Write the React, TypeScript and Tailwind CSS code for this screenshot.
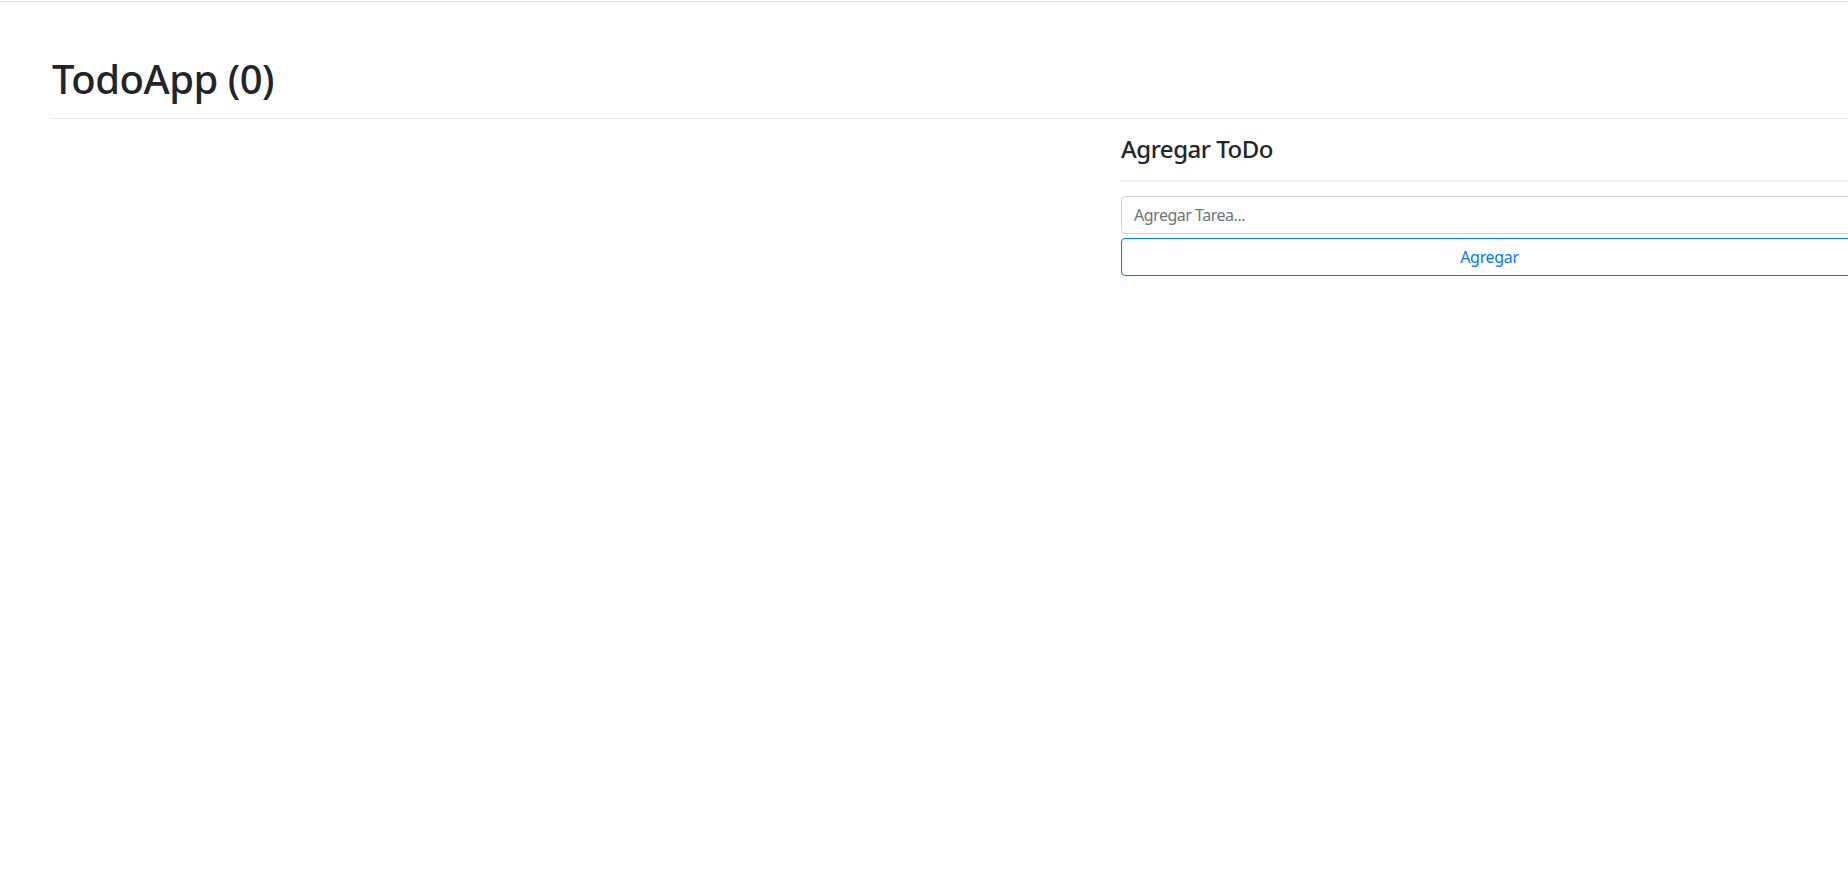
export default function App() {
  return (
    <div
      className="h-screen w-full overflow-hidden bg-white text-[#212529]"
      style={{ fontFamily: '"Noto Sans", "Open Sans", sans-serif' }}
    >
      <div className="h-px bg-white" />
      <div className="h-px bg-[#dcdcdc]" />
      <div className="ml-[52px] w-[1804px] pt-[53px]">
        <h1 className="text-[40px] leading-[48px] font-medium tracking-[-0.012em]">TodoApp (0)</h1>
        <hr className="mt-[15px] mb-4 border-0 border-t border-[#e6e6e6]" />
        <div className="flex gap-[29px]">
          <div className="w-[1040px] shrink-0" />
          <div className="w-[737px] shrink-0">
            <h4 className="text-2xl leading-[28.8px] font-medium tracking-[-0.02em] mb-2">Agregar ToDo</h4>
            <hr className="mt-4 mb-[15px] border-0 border-t border-[#e6e6e6]" />
            <input
              type="text"
              placeholder="Agregar Tarea..."
              className="block w-full h-[38px] px-3 py-1.5 text-base leading-6 tracking-[-0.03em] text-[#495057] bg-white border border-[#ced4da] rounded placeholder:text-[#6c757d] outline-none"
            />
            <button className="mt-1 block w-full h-[38px] px-3 py-1.5 text-base leading-6 tracking-[-0.02em] text-[#007bff] bg-white border border-[#007bff] rounded">
              Agregar
            </button>
          </div>
        </div>
      </div>
    </div>
  );
}
